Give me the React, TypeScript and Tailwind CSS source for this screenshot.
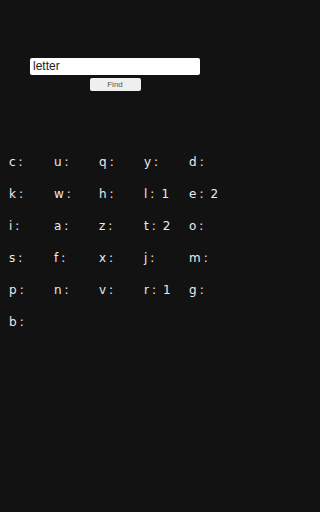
import React, { useState } from 'react';

const counts: [string, string][] = [
  ['c', ''], ['u', ''], ['q', ''], ['y', ''], ['d', ''],
  ['k', ''], ['w', ''], ['h', ''], ['l', '1'], ['e', '2'],
  ['i', ''], ['a', ''], ['z', ''], ['t', '2'], ['o', ''],
  ['s', ''], ['f', ''], ['x', ''], ['j', ''], ['m', ''],
  ['p', ''], ['n', ''], ['v', ''], ['r', '1'], ['g', ''],
  ['b', ''],
];

const App: React.FC = (): JSX.Element => {
  const [word, setWord] = useState<string>('letter');

  return (
    <div className="min-h-[512px] w-full bg-[#121212] font-['Liberation_Sans',Arial,sans-serif]">
      <div className="w-[230px]">
        {/* Search */}
        <div className="flex flex-col items-center pt-[58px]">
          <input
            value={word}
            onChange={(e) => setWord(e.target.value)}
            className="h-[17px] w-[170px] rounded-[2px] bg-white px-[3px] text-[12px] leading-[17px] text-[#222] outline-none"
          />
          <button className="mt-[3px] h-[13px] w-[51px] rounded-[2px] bg-[#efefef] text-[8px] leading-[13px] text-[#555]">
            Find
          </button>
        </div>

        {/* Letter counts */}
        <div className="mt-[64px] grid grid-cols-[repeat(4,45px)_1fr] gap-y-[18px] pl-[9px] font-['DejaVu_Sans',sans-serif] text-[12px] leading-[14px] text-[#ececec]">
          {counts.map(([letter, n]) => (
            <div key={letter} className="flex whitespace-nowrap">
              <span>{letter}</span>
              <span className="ml-[3px]">:</span>
              {n && <span className="ml-[7px]">{n}</span>}
            </div>
          ))}
        </div>
      </div>
    </div>
  );
};

export default App;
